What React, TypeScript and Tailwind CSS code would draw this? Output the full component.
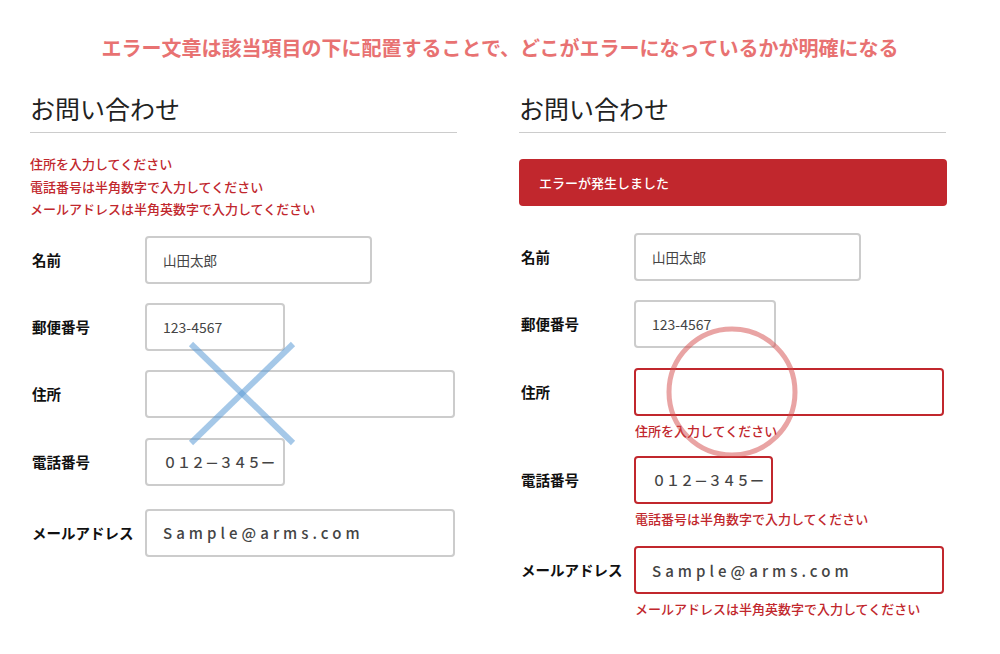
import React from 'react'

const font = { fontFamily: '"Noto Sans CJK JP", "Noto Sans", sans-serif' }

interface Field {
  label: string
  value: string
  width: string
  mt: string
  text: string
  error?: string
}

const email = 'Sample@arms.com'
const phone = '０１２－３４５ー'

const leftFields: Field[] = [
  { label: '名前', value: '山田太郎', width: 'w-[227px]', mt: 'mt-[15px]', text: 'text-[13.5px]' },
  { label: '郵便番号', value: '123-4567', width: 'w-[140px]', mt: 'mt-[19px]', text: 'text-[14px]' },
  { label: '住所', value: '', width: 'w-[310px]', mt: 'mt-[19px]', text: 'text-[14px]' },
  { label: '電話番号', value: phone, width: 'w-[140px]', mt: 'mt-[20px]', text: 'text-[14px] font-medium' },
  { label: 'メールアドレス', value: email, width: 'w-[310px]', mt: 'mt-[23px]', text: 'text-[15px] tracking-[0.27em] font-medium' },
]

const rightFields: Field[] = [
  { label: '名前', value: '山田太郎', width: 'w-[227px]', mt: 'mt-[27px]', text: 'text-[13.5px]' },
  { label: '郵便番号', value: '123-4567', width: 'w-[142px]', mt: 'mt-[19px]', text: 'text-[14px]' },
  { label: '住所', value: '', width: 'w-[310px]', mt: 'mt-[20px]', text: 'text-[14px]', error: '住所を入力してください' },
  { label: '電話番号', value: phone, width: 'w-[139px]', mt: 'mt-[15px]', text: 'text-[14px] font-medium', error: '電話番号は半角数字で入力してください' },
  { label: 'メールアドレス', value: email, width: 'w-[310px]', mt: 'mt-[17px]', text: 'text-[15px] tracking-[0.27em] font-medium', error: 'メールアドレスは半角英数字で入力してください' },
]

function Row({ field, invalid }: { field: Field; invalid?: boolean }) {
  return (
    <div className={field.mt}>
      <div className="flex items-center">
        <label className="w-[115px] shrink-0 pl-[2px] text-[14.5px] font-bold text-[#111]">{field.label}</label>
        <input
          readOnly
          defaultValue={field.value}
          style={font}
          className={`${field.width} ${field.text} h-[48px] rounded-[4px] border-2 bg-white pl-[16px] text-[#444] outline-none ${
            invalid ? 'border-[#c1272d]' : 'border-[#cccccc]'
          }`}
        />
      </div>
      {field.error && (
        <p className="ml-[116px] mt-[5px] text-[13px] leading-[20px] font-medium text-[#c1272d]">{field.error}</p>
      )}
    </div>
  )
}

export default function App() {
  return (
    <div className="relative h-[654px] w-[1000px] overflow-hidden bg-white" style={font}>
      <h1 className="pt-[34px] text-center text-[20px] leading-[28px] font-bold text-[#e87272]">
        エラー文章は該当項目の下に配置することで、どこがエラーになっているかが明確になる
      </h1>

      <div className="flex gap-[62px] pl-[30px]">
        {/* NG example */}
        <div className="w-[427px]">
          <h2 className="mt-[30px] border-b border-[#cccccc] pb-[8px] text-[25px] leading-[32px] text-[#222]">お問い合わせ</h2>
          <ul className="mt-[20px] text-[13px] leading-[22.5px] font-medium text-[#c1272d]">
            <li>住所を入力してください</li>
            <li>電話番号は半角数字で入力してください</li>
            <li>メールアドレスは半角英数字で入力してください</li>
          </ul>
          {leftFields.map((f) => (
            <Row key={f.label} field={f} />
          ))}
        </div>

        {/* OK example */}
        <div className="w-[427px]">
          <h2 className="mt-[30px] border-b border-[#cccccc] pb-[8px] text-[25px] leading-[32px] text-[#222]">お問い合わせ</h2>
          <div className="mt-[26px] flex h-[47px] w-[428px] items-center rounded-[4px] bg-[#c1272d] pl-[20px] text-[13px] font-medium text-white">
            エラーが発生しました
          </div>
          {rightFields.map((f) => (
            <Row key={f.label} field={f} invalid={!!f.error} />
          ))}
        </div>
      </div>

      {/* blue cross */}
      <svg className="pointer-events-none absolute left-[186px] top-[339px]" width="112" height="110" viewBox="0 0 112 110">
        <g stroke="#5b9bd5" strokeOpacity="0.55" strokeWidth="6">
          <line x1="5" y1="5" x2="107" y2="104" />
          <line x1="107" y1="5" x2="5" y2="104" />
        </g>
      </svg>

      {/* red circle */}
      <svg className="pointer-events-none absolute left-[664px] top-[324px]" width="136" height="136" viewBox="0 0 136 136">
        <circle cx="68" cy="68" r="63" fill="none" stroke="#d44a4a" strokeOpacity="0.5" strokeWidth="5" />
      </svg>
    </div>
  )
}
